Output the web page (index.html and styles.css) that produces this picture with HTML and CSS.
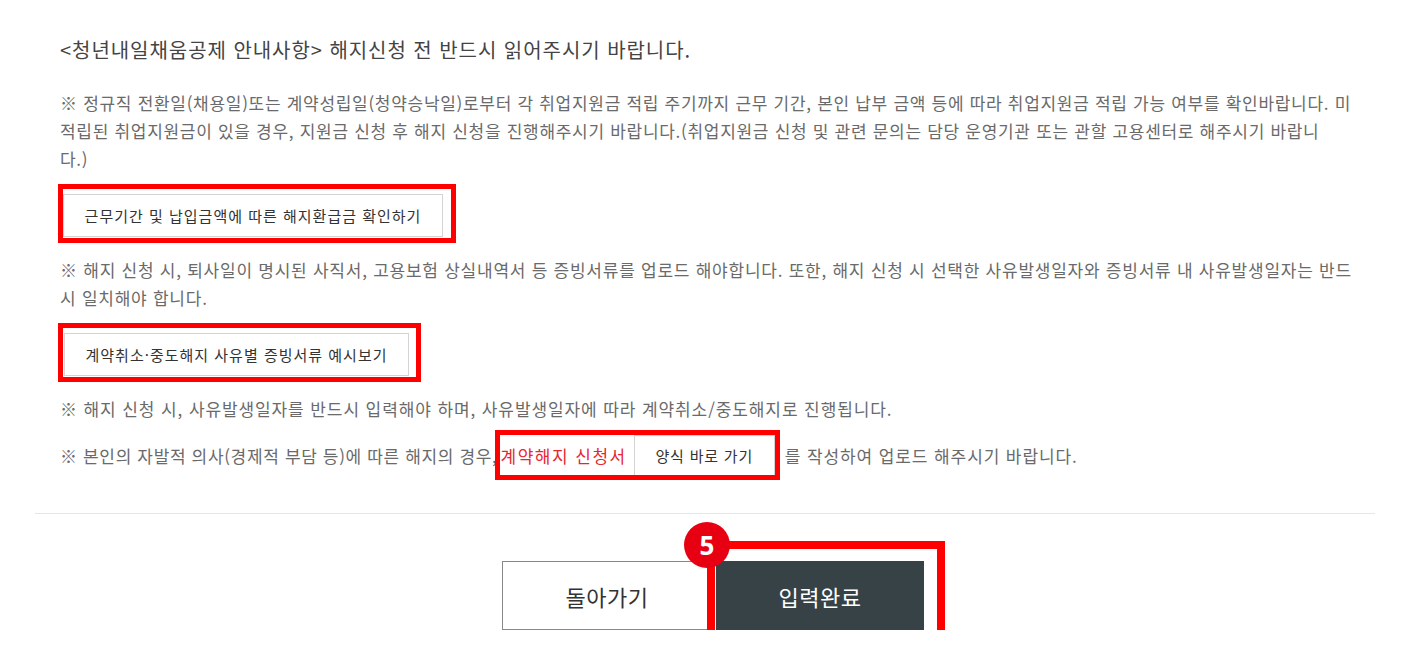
FILE: index.html
```html
<!DOCTYPE html>
<html lang="ko">
<head>
<meta charset="utf-8">
<title>청년내일채움공제 해지신청</title>
<link rel="stylesheet" href="styles.css">
</head>
<body>
<div class="page">
  <section class="notice">
    <h2 class="notice-title">&lt;청년내일채움공제 안내사항&gt; 해지신청 전 반드시 읽어주시기 바랍니다.</h2>
    <p class="note note-first">※ 정규직 전환일(채용일)또는 계약성립일(청약승낙일)로부터 각 취업지원금 적립 주기까지 근무 기간, 본인 납부 금액 등에 따라 취업지원금 적립 가능 여부를 확인바랍니다. 미<br>적립된 취업지원금이 있을 경우, 지원금 신청 후 해지 신청을 진행해주시기 바랍니다.(취업지원금 신청 및 관련 문의는 담당 운영기관 또는 관할 고용센터로 해주시기 바랍니<br>다.)</p>
    <div class="btn-row">
      <span class="mark mark-refund"><button class="sub-btn btn-refund" type="button">근무기간 및 납입금액에 따른 해지환급금 확인하기</button></span>
    </div>
    <p class="note note-docs">※ 해지 신청 시, 퇴사일이 명시된 사직서, 고용보험 상실내역서 등 증빙서류를 업로드 해야합니다. 또한, 해지 신청 시 선택한 사유발생일자와 증빙서류 내 사유발생일자는 반드시 일치해야 합니다.</p>
    <div class="btn-row">
      <span class="mark mark-docs"><button class="sub-btn btn-docs" type="button">계약취소·중도해지 사유별 증빙서류 예시보기</button></span>
    </div>
    <p class="note">※ 해지 신청 시, 사유발생일자를 반드시 입력해야 하며, 사유발생일자에 따라 계약취소/중도해지로 진행됩니다.</p>
    <div class="note note-form">
      <span class="form-lead">※ 본인의 자발적 의사(경제적 부담 등)에 따른 해지의 경우,</span>
      <span class="mark mark-form">
        <span class="form-name">계약해지 신청서</span>
        <button class="sub-btn btn-form" type="button">양식 바로 가기</button>
      </span>
      <span class="form-tail">를 작성하여 업로드 해주시기 바랍니다.</span>
    </div>
  </section>
  <div class="actions">
    <button class="act-btn act-back" type="button">돌아가기</button>
    <span class="mark mark-submit">
      <button class="act-btn act-submit" type="button">입력완료</button>
      <span class="step-badge">5</span>
    </span>
  </div>
</div>
</body>
</html>
```

FILE: styles.css
```css
html, body {
  margin: 0;
  padding: 0;
  background: #ffffff;
  overflow: hidden;
}

body {
  font-family: "Noto Sans CJK KR", "Noto Sans", sans-serif;
  color: #666666;
}

.page {
  margin: 0 33px 0 35px;
}

.notice {
  padding: 37px 19px 37px 25px;
  border-bottom: 1px solid #e6e6e6;
}

.notice-title {
  margin: 0;
  font-size: 20px;
  line-height: 26px;
  font-weight: 400;
  letter-spacing: 0.95px;
  color: #444444;
}

.note {
  margin: 19px 0 0 0;
  font-size: 17px;
  line-height: 28px;
  letter-spacing: 0.9px;
  color: #6a6a6a;
}

.note-first {
  margin-top: 26px;
  letter-spacing: 0.7px;
}

.note-docs {
  letter-spacing: 0.75px;
}

.btn-row {
  display: flex;
  margin-top: 21px;
}

.btn-row + .note {
  margin-top: 19px;
}

.mark {
  position: relative;
  display: inline-flex;
  align-items: center;
}

.mark::after {
  content: "";
  position: absolute;
  border: 5px solid #ff0000;
  pointer-events: none;
}

.sub-btn {
  font-family: inherit;
  font-size: 15px;
  letter-spacing: 1px;
  color: #333333;
  background: #ffffff;
  border: 1px solid #d4d4d4;
  padding: 0;
  margin: 0;
  cursor: pointer;
}

.btn-refund {
  width: 380px;
  height: 43px;
  margin-left: 3px;
}

.mark-refund::after {
  left: -2px;
  top: -10px;
  right: -13px;
  bottom: -6px;
}

.btn-docs {
  width: 345px;
  height: 43px;
  margin-left: 4px;
}

.mark-docs::after {
  left: -2px;
  top: -10px;
  right: -12px;
  bottom: -6px;
}

.note-form {
  display: flex;
  align-items: center;
  margin-top: 12px;
  height: 41px;
}

.form-lead {
  letter-spacing: 0.65px;
}

.form-name {
  color: #e8262f;
  margin-left: 3px;
  letter-spacing: 1.5px;
}

.btn-form {
  width: 141px;
  height: 41px;
  margin-left: 7px;
  letter-spacing: 0.8px;
}

.mark-form::after {
  left: -3px;
  top: -5px;
  right: -5px;
  bottom: -4px;
}

.form-tail {
  margin-left: 10px;
}

.actions {
  display: flex;
  justify-content: center;
  gap: 4px;
  padding: 47px 0 0 16px;
}

.act-btn {
  width: 210px;
  height: 69px;
  font-family: inherit;
  font-size: 22px;
  letter-spacing: 0.5px;
  margin: 0;
  padding: 0;
  cursor: pointer;
}

.act-back {
  background: #ffffff;
  color: #333333;
  border: 1px solid #888888;
}

.act-submit {
  width: 208px;
  background: #374246;
  color: #ffffff;
  border: 1px solid #374246;
}

.mark-submit::after {
  border-width: 8px;
  left: -9px;
  top: -20px;
  right: -21px;
  bottom: -17px;
}

.step-badge {
  position: absolute;
  left: -32px;
  top: -39px;
  width: 46px;
  height: 46px;
  border-radius: 50%;
  background: #e60012;
  color: #ffffff;
  font-family: "Open Sans", "Liberation Sans", sans-serif;
  font-weight: 700;
  font-size: 26px;
  line-height: 46px;
  text-align: center;
  z-index: 2;
}
```
